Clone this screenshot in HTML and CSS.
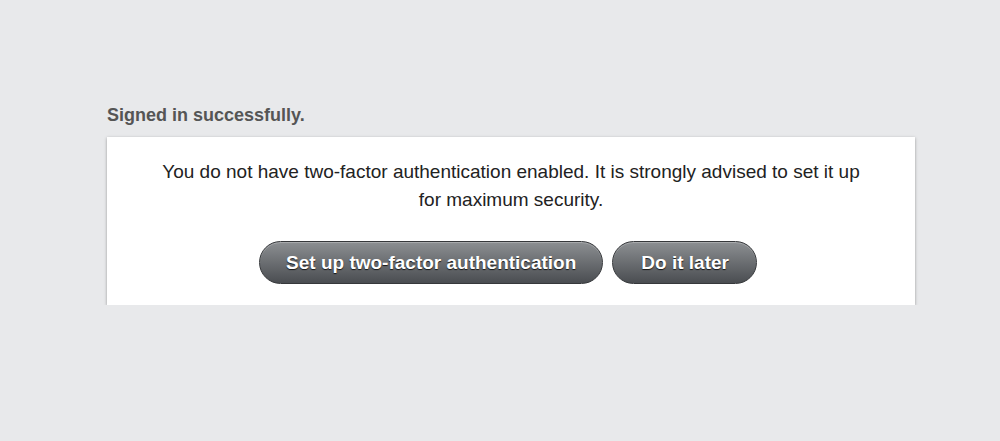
FILE: index.html
```html
<!DOCTYPE html>
<html lang="en">
<head>
	<meta charset="UTF-8">
	<title>Signed in</title>
	<link rel="stylesheet" href="styles.css">
</head>
<body>
	<div id="wrap">
		<h2 class="notice">Signed in successfully.</h2>
		<div class="card">
			<p class="message">You do not have two-factor authentication enabled. It is strongly advised to set it up for maximum security.</p>
			<div class="actions">
				<a href="#" class="button">Set up two-factor authentication</a>
				<a href="#" class="button later">Do it later</a>
			</div>
		</div>
	</div>
</body>
</html>
```

FILE: styles.css
```css
* {
	margin: 0;
	padding: 0;
	box-sizing: border-box;
}
body {
	font-family: "Liberation Sans", Arial, sans-serif;
	font-size: 19px;
	background: #e8e9eb;
	color: #222;
}
#wrap {
	width: 808px;
	margin: 0 auto 0 107px;
	padding-top: 104px;
}
.notice {
	font-size: 18px;
	font-weight: bold;
	color: #555;
	margin-bottom: 11px;
	line-height: 22px;
}
.card {
	background: #fff;
	box-shadow: 0 1px 3px rgba(0, 0, 0, 0.35);
	padding: 21px 20px 21px;
	text-align: center;
}
.message {
	max-width: 710px;
	margin: 0 auto;
	line-height: 28px;
}
.actions {
	display: flex;
	justify-content: center;
	gap: 9px;
	margin-top: 27px;
	padding-right: 6px;
}
.button {
	display: inline-block;
	height: 43px;
	line-height: 41px;
	padding: 0 26px;
	border-radius: 22px;
	border: 1px solid #36383b;
	background: linear-gradient(#8c8f92, #4a4d51);
	box-shadow: inset 0 1px 0 rgba(255, 255, 255, 0.25);
	color: #fff;
	font-size: 19px;
	font-weight: bold;
	text-decoration: none;
	text-shadow: 0 1px 1px rgba(0, 0, 0, 0.8);
}
.later {
	padding: 0 27px 0 28px;
}
```
